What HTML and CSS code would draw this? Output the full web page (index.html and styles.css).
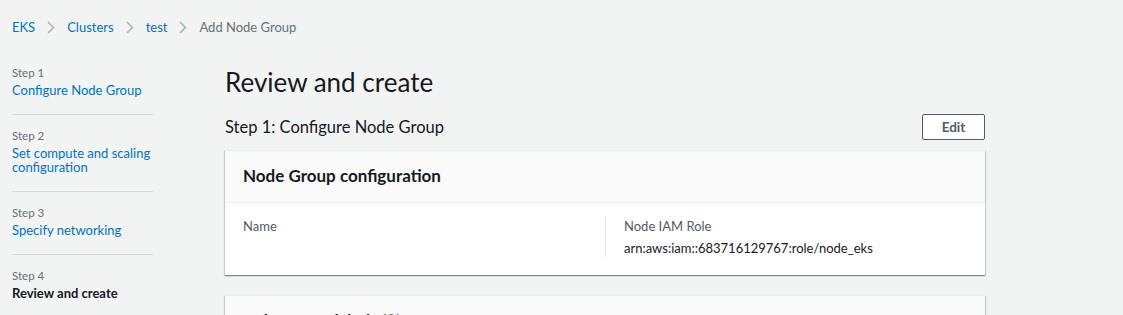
FILE: index.html
```html
<!DOCTYPE html>
<html lang="en">
<head>
  <meta charset="UTF-8" />
  <meta name="viewport" content="width=device-width, initial-scale=1.0"/>
  <title>Add Node Group</title>
  <link rel="stylesheet" href="styles.css">
</head>
<body>

  <nav class="breadcrumbs">
    <a href="#">EKS</a>
    <span class="chevron"><svg width="8" height="13" viewBox="0 0 8 13"><path d="M1 1l5.5 5.5L1 12" fill="none" stroke="#aab7b8" stroke-width="1.6"/></svg></span>
    <a href="#">Clusters</a>
    <span class="chevron"><svg width="8" height="13" viewBox="0 0 8 13"><path d="M1 1l5.5 5.5L1 12" fill="none" stroke="#aab7b8" stroke-width="1.6"/></svg></span>
    <a href="#">test</a>
    <span class="chevron"><svg width="8" height="13" viewBox="0 0 8 13"><path d="M1 1l5.5 5.5L1 12" fill="none" stroke="#aab7b8" stroke-width="1.6"/></svg></span>
    <span class="current">Add Node Group</span>
  </nav>

  <div class="layout">
    <ul class="steps">
      <li class="step">
        <div class="step-num">Step 1</div>
        <a href="#" class="step-name">Configure Node Group</a>
      </li>
      <li class="step">
        <div class="step-num">Step 2</div>
        <a href="#" class="step-name">Set compute and scaling configuration</a>
      </li>
      <li class="step">
        <div class="step-num">Step 3</div>
        <a href="#" class="step-name">Specify networking</a>
      </li>
      <li class="step active">
        <div class="step-num">Step 4</div>
        <span class="step-name">Review and create</span>
      </li>
    </ul>

    <main class="content">
      <h1>Review and create</h1>

      <div class="section-head">
        <h2>Step 1: Configure Node Group</h2>
        <button class="btn">Edit</button>
      </div>

      <div class="card">
        <div class="card-header">Node Group configuration</div>
        <div class="card-body">
          <div class="col">
            <div class="label">Name</div>
          </div>
          <div class="col">
            <div class="label">Node IAM Role</div>
            <div class="value">arn:aws:iam::683716129767:role/node_eks</div>
          </div>
        </div>
      </div>

      <div class="card">
        <div class="card-header">Kubernetes labels <span class="count">(0)</span></div>
      </div>
    </main>
  </div>

</body>
</html>
```

FILE: styles.css
```css
body {
  margin: 0;
  background: #f2f3f3;
  font-family: Lato, "Open Sans", sans-serif;
  color: #16191f;
  font-size: 13px;
  overflow: hidden;
}

a {
  color: #0073bb;
  text-decoration: none;
}

.breadcrumbs {
  display: flex;
  align-items: center;
  gap: 12px;
  padding: 17px 12px 0;
  height: 20px;
  font-size: 13px;
}

.breadcrumbs .chevron {
  display: flex;
}

.breadcrumbs .current {
  color: #687078;
}

.layout {
  display: flex;
  padding-top: 25px;
}

.steps {
  list-style: none;
  margin: 0;
  padding: 0 0 0 12px;
  width: 141px;
}

.step {
  padding: 3px 0 17px;
  border-bottom: 1px solid #d5dbdb;
  margin-bottom: 10px;
}

.step-num {
  font-size: 11.5px;
  color: #687078;
  line-height: 16px;
}

.step-name {
  display: block;
  line-height: 14px;
  margin-top: 2px;
}

.step.active {
  border-bottom: none;
}

.step.active .step-name {
  font-weight: bold;
  color: #16191f;
}

.content {
  margin-left: 72px;
  width: 760px;
}

h1 {
  margin: 0;
  font-size: 26px;
  font-weight: normal;
  line-height: 34px;
  padding-top: 3px;
}

.section-head {
  display: flex;
  justify-content: space-between;
  align-items: center;
  margin-top: 15px;
  margin-bottom: 10px;
}

h2 {
  margin: 0;
  font-size: 16.5px;
  font-weight: normal;
  line-height: 24px;
}

.btn {
  font-family: inherit;
  font-size: 13.5px;
  font-weight: bold;
  color: #545b64;
  background: #fff;
  border: 1px solid #545b64;
  border-radius: 2px;
  width: 63px;
  height: 26px;
  cursor: pointer;
}

.card {
  background: #fff;
  border-top: 1px solid #eaeded;
  box-shadow: 0 1px 1px 0 rgba(0, 28, 36, 0.3), 1px 1px 1px 0 rgba(0, 28, 36, 0.15), -1px 1px 1px 0 rgba(0, 28, 36, 0.15);
  margin-bottom: 20px;
}

.card-header {
  background: #fafafa;
  border-bottom: 1px solid #eaeded;
  padding: 0 18px;
  height: 51px;
  line-height: 49px;
  font-size: 17px;
  font-weight: bold;
}

.card-header .count {
  font-weight: normal;
  color: #687078;
}

.card-body {
  display: grid;
  grid-template-columns: 1fr 1fr;
  padding: 13px 18px 17px;
}

.col + .col {
  border-left: 1px solid #eaeded;
  padding-left: 18px;
}

.col {
  min-height: 42px;
}

.label {
  color: #545b64;
  line-height: 20px;
}

.value {
  line-height: 20px;
  margin-top: 2px;
}
```
